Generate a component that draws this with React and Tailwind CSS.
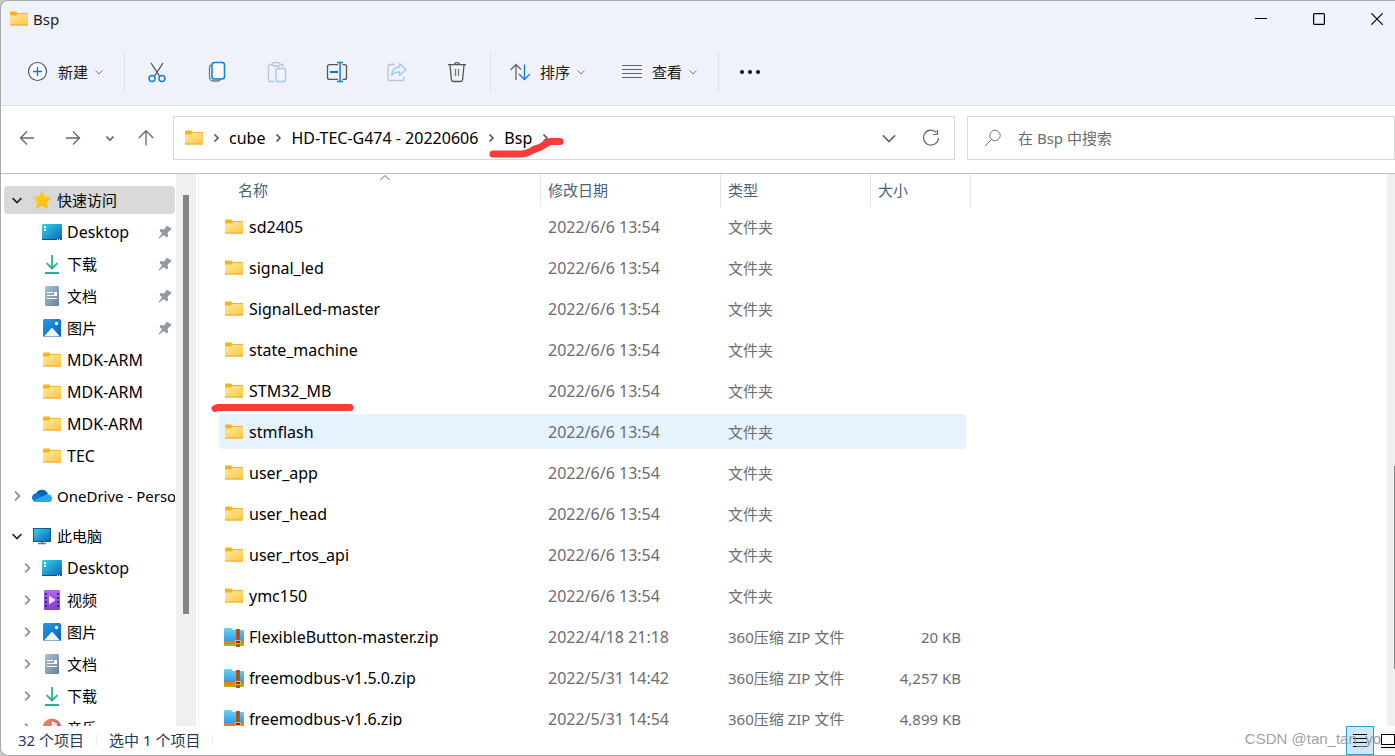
import React from 'react';
import clsx from 'clsx';

const quickAccess = [
  { icon: DesktopIcon, label: 'Desktop', pinned: true },
  { icon: DownloadIcon, label: '下载', pinned: true },
  { icon: DocumentIcon, label: '文档', pinned: true },
  { icon: PictureIcon, label: '图片', pinned: true },
  { icon: FolderIcon, label: 'MDK-ARM' },
  { icon: FolderIcon, label: 'MDK-ARM' },
  { icon: FolderIcon, label: 'MDK-ARM' },
  { icon: FolderIcon, label: 'TEC' },
];

const thisPc = [
  { icon: DesktopIcon, label: 'Desktop' },
  { icon: VideoIcon, label: '视频' },
  { icon: PictureIcon, label: '图片' },
  { icon: DocumentIcon, label: '文档' },
  { icon: DownloadIcon, label: '下载' },
  { icon: MusicIcon, label: '音乐' },
];

const files = [
  { name: 'sd2405', date: '2022/6/6 13:54' },
  { name: 'signal_led', date: '2022/6/6 13:54' },
  { name: 'SignalLed-master', date: '2022/6/6 13:54' },
  { name: 'state_machine', date: '2022/6/6 13:54' },
  { name: 'STM32_MB', date: '2022/6/6 13:54' },
  { name: 'stmflash', date: '2022/6/6 13:54', hovered: true },
  { name: 'user_app', date: '2022/6/6 13:54' },
  { name: 'user_head', date: '2022/6/6 13:54' },
  { name: 'user_rtos_api', date: '2022/6/6 13:54' },
  { name: 'ymc150', date: '2022/6/6 13:54' },
  { name: 'FlexibleButton-master.zip', date: '2022/4/18 21:18', size: '20 KB' },
  { name: 'freemodbus-v1.5.0.zip', date: '2022/5/31 14:42', size: '4,257 KB' },
  { name: 'freemodbus-v1.6.zip', date: '2022/5/31 14:54', size: '4,899 KB' },
];

/* Shared gradients for the coloured icons */
function IconDefs() {
  return (
    <svg width="0" height="0" className="absolute" aria-hidden="true">
      <defs>
        <linearGradient id="folder" x1="0" y1="0" x2="1" y2="1">
          <stop offset="0" stopColor="#ffe9a6" />
          <stop offset="1" stopColor="#ffc83c" />
        </linearGradient>
        <linearGradient id="screen" x1="0" y1="0" x2="1" y2="1">
          <stop offset="0" stopColor="#35d6e4" />
          <stop offset="1" stopColor="#0c62bd" />
        </linearGradient>
        <linearGradient id="down" x1="0" y1="0" x2="0" y2="1">
          <stop offset="0" stopColor="#35c48d" />
          <stop offset="1" stopColor="#12a3a3" />
        </linearGradient>
        <linearGradient id="doc" x1="0" y1="0" x2="1" y2="1">
          <stop offset="0" stopColor="#b0c2d4" />
          <stop offset="1" stopColor="#64809f" />
        </linearGradient>
        <linearGradient id="pic" x1="0" y1="0" x2="1" y2="1">
          <stop offset="0" stopColor="#1d9df0" />
          <stop offset="1" stopColor="#0a62b8" />
        </linearGradient>
        <linearGradient id="video" x1="0" y1="0" x2="0" y2="1">
          <stop offset="0" stopColor="#b266ee" />
          <stop offset="1" stopColor="#7f3fd8" />
        </linearGradient>
        <linearGradient id="music" x1="0" y1="0" x2="1" y2="1">
          <stop offset="0" stopColor="#f08a4b" />
          <stop offset="1" stopColor="#c4509a" />
        </linearGradient>
        <linearGradient id="zip" x1="0" y1="0" x2="0" y2="1">
          <stop offset="0" stopColor="#6fd0f8" />
          <stop offset="1" stopColor="#2f9de8" />
        </linearGradient>
        <linearGradient id="star" x1="0" y1="0" x2="1" y2="1">
          <stop offset="0" stopColor="#ffda2e" />
          <stop offset="1" stopColor="#fdb400" />
        </linearGradient>
      </defs>
    </svg>
  );
}

function Icon({ size = 20, children, className }) {
  return (
    <svg
      width={size}
      height={size}
      viewBox={`0 0 ${size} ${size}`}
      fill="none"
      className={clsx('shrink-0', className)}
      aria-hidden="true"
    >
      {children}
    </svg>
  );
}

function FolderIcon() {
  return (
    <Icon>
      <path d="M1 3.500a1 1 0 0 1 1-1h5.200l2 2-2 3H1z" fill="#f8b416" />
      <path d="M1 6.500h6l2-2h9a1 1 0 0 1 1 1V16a.5.5 0 0 1-.5.5h-17A.5.500 0 0 1 1 16z" fill="url(#folder)" />
      <path d="M1 16h18" stroke="#e9a727" />
      <path d="M9 4.500h10" stroke="#efb335" />
    </Icon>
  );
}

function DesktopIcon() {
  return (
    <Icon>
      <rect y="2" width="20" height="16" rx="1" fill="url(#screen)" />
      <path d="M2 4h2v2H2zM2 7h2v2H2z" fill="#fff" />
      <path d="M0 17h20v.5a.5.5 0 0 1-.5.5H.5a.5.5 0 0 1-.5-.5z" fill="#0b4f93" />
      <path d="M15 17.500h1M17 17.500h1" stroke="#fff" />
    </Icon>
  );
}

function DownloadIcon() {
  return (
    <Icon>
      <path d="M4.500 9l5.500 5.500L15.500 9" stroke="url(#down)" strokeWidth="1.800" />
      <path d="M10 1v13" stroke="#25b596" strokeWidth="1.800" />
      <path d="M3 19h14" stroke="#22b592" strokeWidth="2" />
    </Icon>
  );
}

function DocumentIcon() {
  return (
    <Icon>
      <rect x="3" width="14" height="20" rx="1" fill="url(#doc)" />
      <path d="M5 6.500h6M5 9.500h10M5 12.500h10" stroke="#fff" />
      <path d="M12 6h3v3h-3z" fill="#fff" />
    </Icon>
  );
}

function PictureIcon() {
  return (
    <Icon>
      <rect x="1" y="1" width="18" height="18" rx="1.500" fill="url(#pic)" />
      <path d="m2 18.500 7-8a1.300 1.300 0 0 1 2 0l7 8z" fill="#eef6fd" />
      <circle cx="14.500" cy="5.500" r="1.700" fill="#fff" />
    </Icon>
  );
}

function VideoIcon() {
  return (
    <Icon>
      <rect x="2" width="16" height="20" rx="1" fill="url(#video)" />
      <path d="M4 3v15M16 3v15" stroke="#4b1f92" strokeWidth="2" strokeDasharray="2 2" />
      <path d="m7 5.500 6.500 4.500L7 14.500z" fill="#f4e9ff" />
    </Icon>
  );
}

function MusicIcon() {
  return (
    <Icon>
      <circle cx="10" cy="10" r="9.500" fill="url(#music)" />
      <path d="M10.500 13V4.500l3.500 1.500v2l-3-1" stroke="#fff" strokeWidth="1.500" />
      <circle cx="9" cy="13" r="2" fill="#fff" />
    </Icon>
  );
}

function StarIcon() {
  return (
    <Icon>
      <path
        d="m10 1 2.800 5.900 6.400.8-4.700 4.500 1.200 6.400L10 15.500l-5.700 3.100 1.200-6.400L.8 7.700l6.400-.8z"
        fill="url(#star)"
        stroke="#fbc21a"
        strokeLinejoin="round"
        strokeWidth=".6"
      />
    </Icon>
  );
}

function OneDriveIcon() {
  return (
    <Icon>
      <path d="M4.500 16a4.300 4.300 0 0 1-.5-8.500A6.500 6.500 0 0 1 16 8l-5 5z" fill="#0364b8" />
      <path d="M4.500 16A4.400 4.400 0 1 1 7 8l6 5-7 3z" fill="#0f78d4" />
      <path d="M4.500 16c-1.500 0-2.700-.6-3.500-1.600L13 9.200c3.500-2.200 7 .2 7 3.300a3.500 3.500 0 0 1-3.500 3.500z" fill="#28a8ea" />
    </Icon>
  );
}

function PcIcon() {
  return (
    <Icon>
      <rect x="1" y="2" width="18" height="14" fill="#16598c" />
      <rect x="2" y="3" width="16" height="12" fill="url(#screen)" />
      <path d="M10 16v2M6 17.500h8" stroke="#5f7482" strokeWidth="1.400" />
    </Icon>
  );
}

function ZipIcon() {
  return (
    <Icon>
      <path d="M0 15h20v3a1 1 0 0 1-1 1H1a1 1 0 0 1-1-1z" fill="#7bc72c" />
      <path d="M0 13h20v4H0z" fill="#f57c0a" />
      <path d="M0 2a1 1 0 0 1 1-1h6l2 2h10a1 1 0 0 1 1 1v10H0z" fill="url(#zip)" />
      <path d="M12 2h4v18h-4z" fill="#b35a17" />
      <path d="M14 3v10" stroke="#7d3507" strokeDasharray="1 1" />
      <path d="M11.500 13.500h5v3h-5z" fill="#7a3608" stroke="#f2b25d" />
    </Icon>
  );
}

function PinIcon() {
  return (
    <Icon size={14}>
      <path
        d="M8.500.5 13.500 3.500 12.500 5.500 11.600 5.400 9.600 8l.5 3.200-1.600 1.200L5.900 10 1.200 13.600l-.7-.7 3.700-4.600L1.500 6l1.200-1.900 3.200.4 1.900-2.300z"
        fill="#8d9ba5"
      />
    </Icon>
  );
}

function Chevron({ dir = 'down', size = 8, bold, className }) {
  const paths = {
    down: 'm.5 2.500 3.500 3.500 3.500-3.500',
    right: 'm2.500.5 3.500 3.500-3.500 3.500',
    up: 'm.5 5.500 3.500-3.500 3.500 3.500',
  };
  return (
    <svg width={size} height={size} viewBox="0 0 8 8" fill="none" className={clsx('shrink-0', className)} aria-hidden="true">
      <path d={paths[dir]} stroke="currentColor" strokeWidth={bold ? 1.6 : 1} vectorEffect="non-scaling-stroke" />
    </svg>
  );
}

function Separator() {
  return <div className="w-px h-10 bg-[#dfe1e8]" />;
}

function ToolButton({ label, disabled, children }) {
  return (
    <button type="button" aria-label={label} disabled={disabled} className="w-15 h-10 flex items-center justify-center">
      {children}
    </button>
  );
}

function Toolbar() {
  return (
    <div className="h-[67px] flex items-center pl-[26px]">
      <button type="button" className="flex items-center">
        <Icon size={22}>
          <circle cx="10.500" cy="10.500" r="9" fill="#f7f9fd" stroke="#555" strokeWidth="1.200" />
          <path d="M10.500 6v9M6 10.500h9" stroke="#0078d4" strokeWidth="1.300" />
        </Icon>
        <span className="ml-[9px] mr-[7px]">新建</span>
        <Chevron className="text-[#777]" />
      </button>
      <div className="w-[21px]" />
      <Separator />
      <div className="w-[2px]" />

      <ToolButton label="剪切">
        <Icon size={22}>
          <path d="m5 2 8.500 13.200M17 2 8.500 15.200" stroke="#555" strokeWidth="1.300" />
          <circle cx="6" cy="17.500" r="3" stroke="#0f7fd8" strokeWidth="1.400" />
          <circle cx="16" cy="17.500" r="3" stroke="#0f7fd8" strokeWidth="1.400" />
        </Icon>
      </ToolButton>
      <ToolButton label="复制">
        <Icon size={22}>
          <path d="M5.500 4C4 4.300 3.500 5 3.500 6.500v9c0 3 1 4.500 4 4.500h4c1.500 0 2.500-.5 3-1.500" stroke="#777" strokeWidth="1.300" />
          <rect x="6" y="1.600" width="12.500" height="16.500" rx="2.500" fill="#f7faff" stroke="#0f7fd8" strokeWidth="1.500" />
        </Icon>
      </ToolButton>
      <ToolButton label="粘贴" disabled>
        <Icon size={22}>
          <path d="M7 3.500H4a1.500 1.500 0 0 0-1.500 1.500v14A1.500 1.500 0 0 0 4 20.500h4M14 3.500h1.500A1.500 1.500 0 0 1 17 5v1" stroke="#bfc2c9" strokeWidth="1.300" />
          <rect x="6.500" y="1.600" width="7.500" height="3.400" rx="1.500" stroke="#bfc2c9" strokeWidth="1.300" />
          <rect x="10" y="7.500" width="9.500" height="13" rx="1.500" fill="#eff5fd" stroke="#9fcbee" strokeWidth="1.400" />
        </Icon>
      </ToolButton>
      <ToolButton label="重命名">
        <Icon size={22}>
          <path d="M12 3.600H3.500a2 2 0 0 0-2 2v10.800a2 2 0 0 0 2 2H12M16.500 3.600h2a2 2 0 0 1 2 2v10.800a2 2 0 0 1-2 2h-2" stroke="#555" strokeWidth="1.300" />
          <path d="M4 11h8" stroke="#0078d4" strokeWidth="2" />
          <path d="M14 1.500v19M11 1.500h6M11 20.500h6" stroke="#0f7fd8" strokeWidth="1.500" />
        </Icon>
      </ToolButton>
      <ToolButton label="共享" disabled>
        <Icon size={22}>
          <path d="M8.500 3.500H4.500a2.500 2.500 0 0 0-2.500 2.500v11a2.500 2.500 0 0 0 2.500 2.500h11a2.500 2.500 0 0 0 2.500-2.500v-1.500" stroke="#bfc2c9" strokeWidth="1.300" />
          <path d="M13.500 2.500 20 8.500l-6.500 6v-3.500c-4-.2-6 1-8 3.500.3-5 3-8.300 8-8.500z" stroke="#9fcbee" strokeLinejoin="round" strokeWidth="1.300" />
        </Icon>
      </ToolButton>
      <ToolButton label="删除">
        <Icon size={22}>
          <path d="M2 3.700h18M8.500 3.500c0-2.500 5-2.500 5 0M4 4l1.400 14.500c.1 1.200.8 2 2 2h7.200c1.200 0 1.900-.8 2-2L18 4" stroke="#555" strokeWidth="1.300" />
          <path d="M9.500 8v7M12.500 8v7" stroke="#777" strokeWidth="1.300" />
        </Icon>
      </ToolButton>

      <div className="w-[3px]" />
      <Separator />
      <button type="button" className="flex items-center ml-[18px]">
        <Icon size={22}>
          <path d="M7 19V4M1.500 9 7 3.500l5 5" stroke="#666" strokeWidth="1.300" />
          <path d="M15.500 3.500V18M10 13l5.500 5.500L21 13" stroke="#0f7fd8" strokeWidth="1.400" />
        </Icon>
        <span className="ml-[9px] mr-[7px]">排序</span>
        <Chevron className="text-[#777]" />
      </button>
      <button type="button" className="flex items-center ml-9">
        <Icon size={22}>
          <path d="M1 4.500h20M1 8.500h20M1 12.500h20M1 16.500h20" stroke="#666" strokeWidth="1.200" />
        </Icon>
        <span className="ml-[9px] mr-[7px]">查看</span>
        <Chevron className="text-[#777]" />
      </button>
      <div className="w-[21px]" />
      <Separator />
      <button type="button" aria-label="更多" className="ml-5">
        <Icon size={22}>
          <circle cx="3" cy="11" r="2" fill="#111" />
          <circle cx="11" cy="11" r="2" fill="#111" />
          <circle cx="19" cy="11" r="2" fill="#111" />
        </Icon>
      </button>
    </div>
  );
}

function TitleBar() {
  return (
    <div className="h-[37px] flex items-center pl-2 pr-3 pb-[2px]">
      <FolderIcon />
      <span className="ml-1">Bsp</span>
      <div className="ml-auto flex items-center gap-[46px] text-black">
        <button type="button" aria-label="最小化">
          <Icon size={12}>
            <path d="M0 5.500h12" stroke="currentColor" />
          </Icon>
        </button>
        <button type="button" aria-label="最大化">
          <Icon size={12}>
            <rect x=".6" y=".6" width="10.800" height="10.800" rx="1" stroke="currentColor" strokeWidth="1.200" />
          </Icon>
        </button>
        <button type="button" aria-label="关闭">
          <Icon size={12}>
            <path d="m.3.3 11.400 11.400M11.700.3.3 11.700" stroke="currentColor" strokeWidth="1.200" />
          </Icon>
        </button>
      </div>
    </div>
  );
}

function AddressRow() {
  return (
    <div className="h-[68px] shrink-0 flex items-center pl-[18px] pb-[3px] border-b border-[#bdbdbd]">
      <div className="w-[154px] shrink-0 flex items-center text-[#666]">
        <button type="button" aria-label="后退">
          <Icon size={16}>
            <path d="M15 8H1.500M8 1.500 1.500 8 8 14.500" stroke="currentColor" strokeWidth="1.300" />
          </Icon>
        </button>
        <button type="button" aria-label="前进" className="ml-[30px]">
          <Icon size={16}>
            <path d="M1 8h13.500M8 1.500 14.500 8 8 14.500" stroke="currentColor" strokeWidth="1.300" />
          </Icon>
        </button>
        <button type="button" aria-label="最近浏览的位置" className="ml-[25px]">
          <Chevron bold />
        </button>
        <button type="button" aria-label="上移" className="ml-6">
          <Icon size={16}>
            <path d="M8 15.500V1M.8 8 8 .8 15.200 8" stroke="currentColor" strokeWidth="1.300" />
          </Icon>
        </button>
      </div>

      <div className="h-11 grow min-w-0 flex items-center border border-[#d9d9d9] pl-[10px] pr-[14px] text-base leading-5 text-black">
        <FolderIcon />
        <Chevron dir="right" bold className="text-[#555] mr-[5px] ml-2" />
        <a href="#cube" className="px-1">cube</a>
        <Chevron dir="right" bold className="text-[#555] mx-[5px]" />
        <a href="#project" className="px-1 whitespace-nowrap">HD-TEC-G474 - 20220606</a>
        <Chevron dir="right" bold className="text-[#555] mx-[5px]" />
        <a href="#bsp" className="px-1">Bsp</a>
        <Chevron dir="right" bold className="text-[#555] mx-[5px]" />
        <button type="button" aria-label="以前的位置" className="ml-auto text-[#666]">
          <Chevron size={14} bold />
        </button>
        <button type="button" aria-label="刷新" className="ml-[26px] text-[#666]">
          <Icon size={18}>
            <path d="M14.500 3.500A7.500 7.500 0 1 0 16.500 9M15.500 1v4.500H11" stroke="currentColor" strokeWidth="1.200" />
          </Icon>
        </button>
      </div>

      <label className="ml-3 h-11 w-[428px] flex items-center border border-[#d9d9d9] pl-4">
        <Icon size={18} className="text-[#777]">
          <circle cx="11" cy="6.500" r="5.200" stroke="currentColor" />
          <path d="M7.500 10.500 1 17" stroke="currentColor" />
        </Icon>
        <input
          type="text"
          aria-label="搜索"
          placeholder="在 Bsp 中搜索"
          className="ml-4 grow min-w-0 outline-none placeholder:text-[#6d6d6d]"
        />
      </label>
    </div>
  );
}

function TreeRow({ icon: IconType, label, arrow, child, pinned, selected }) {
  const latin = /^[\w-]+$/.test(label);
  return (
    <a
      href="#tree"
      className={clsx(
        'h-7 my-[2px] flex items-center rounded-sm overflow-hidden',
        child ? 'pl-4' : 'pl-[6px]',
        selected && 'bg-[#d9d9d9]'
      )}
    >
      <span className="w-[14px] mr-2 shrink-0 flex justify-center">
        {arrow && <Chevron dir={arrow} size={10} bold className={arrow === 'down' ? 'text-[#222]' : 'text-[#888]'} />}
      </span>
      <IconType />
      <span className={clsx('ml-[5px] whitespace-nowrap', latin && 'text-base leading-5')}>{label}</span>
      {pinned && (
        <span className="ml-auto mr-[3px]">
          <PinIcon />
        </span>
      )}
    </a>
  );
}

function Sidebar() {
  return (
    <nav className="w-[198px] shrink-0 flex border-r border-[#f3f3f3] text-black">
      <div className="grow min-w-0 pl-[3px] pr-px pt-2 overflow-hidden">
        <div className="flex flex-col pt-[2px]">
          <TreeRow icon={StarIcon} label="快速访问" arrow="down" selected />
          {quickAccess.map((item, i) => (
            <TreeRow key={i} child {...item} />
          ))}
        </div>
        <div className="flex flex-col pt-2">
          <TreeRow icon={OneDriveIcon} label="OneDrive - Personal" arrow="right" />
        </div>
        <div className="flex flex-col pt-2">
          <TreeRow icon={PcIcon} label="此电脑" arrow="down" />
          {thisPc.map((item) => (
            <TreeRow key={item.label} child arrow="right" {...item} />
          ))}
        </div>
      </div>
      {/* Scrollbar */}
      <div className="w-5 mr-[2px] shrink-0 bg-[#f0f0f0] pt-[21px]">
        <div className="mx-auto w-[6px] h-[419px] bg-[#858585]" />
      </div>
    </nav>
  );
}

function FileTable() {
  const head = 'font-normal p-0 pb-[2px] pl-[7px] border-r border-[#e5e5e5]';
  return (
    <table className="w-[752px] table-fixed border-separate border-spacing-0 text-left">
      <thead>
        <tr className="h-[33px] text-[#4c607a]">
          <th className="relative w-[322px] font-normal p-0 pb-[2px] pl-[19px] border-r border-[#e5e5e5]">
            名称
            <Chevron dir="up" size={10} className="absolute left-[161px] -top-px text-[#666]" />
          </th>
          <th className={clsx(head, 'w-[180px]')}>修改日期</th>
          <th className={clsx(head, 'w-[150px]')}>类型</th>
          <th className={clsx(head, 'w-[100px]')}>大小</th>
        </tr>
      </thead>
      <tbody>
        {files.map((file) => {
          const cell = clsx('h-[35px] flex items-center whitespace-nowrap', file.hovered && 'bg-[#e5f3ff]');
          return (
            <tr key={file.name} className="text-[#6d6d6d]">
              <td className="p-0 pt-[2px] pb-1">
                <div className={clsx(cell, 'pl-[5px] rounded-l-sm text-base leading-5 text-black')}>
                  {file.size ? <ZipIcon /> : <FolderIcon />}
                  <span className="ml-[5px]">{file.name}</span>
                </div>
              </td>
              <td className="p-0 pt-[2px] pb-1">
                <div className={clsx(cell, 'pl-[7px] text-base leading-5')}>{file.date}</div>
              </td>
              <td className="p-0 pt-[2px] pb-1">
                <div className={clsx(cell, 'pl-[7px]')}>{file.size ? '360压缩 ZIP 文件' : '文件夹'}</div>
              </td>
              <td className="p-0 pt-[2px] pb-1 pr-[5px]">
                <div className={clsx(cell, 'justify-end pr-[5px] rounded-r-sm')}>{file.size}</div>
              </td>
            </tr>
          );
        })}
      </tbody>
    </table>
  );
}

function StatusBar() {
  return (
    <div className="h-[29px] shrink-0 flex pl-[17px] text-[#1e395b]">
      <div className="flex items-center pb-[2px]">
        <span>32 个项目</span>
        <div className="w-px h-3 bg-[#f0f0f0] mx-3" />
        <span>选中 1 个项目</span>
        <div className="w-px h-3 bg-[#f0f0f0] mx-3" />
      </div>
      <div className="ml-auto h-full flex items-center">
        <button
          type="button"
          aria-label="详细信息"
          className="w-7 h-full flex items-center justify-center border border-[#26a0da] bg-[#cce8f7] text-black"
        >
          <Icon size={14}>
            <path d="M0 .5h14M0 4.500h14M0 8.500h14M0 12.500h14" stroke="currentColor" />
          </Icon>
        </button>
        <button type="button" aria-label="大图标" className="ml-1 pl-[3px] w-[17px] h-5 flex items-center bg-[#f5f5f5] text-black">
          <Icon size={14}>
            <rect x=".5" y=".5" width="13" height="10" fill="#fff" stroke="currentColor" />
            <path d="M0 13.500h14" stroke="currentColor" />
          </Icon>
        </button>
      </div>
    </div>
  );
}

export default function App() {
  return (
    <div className="h-screen bg-[#c9c9c9] font-['Noto_Sans','Noto_Sans_CJK_SC',sans-serif] text-[15px] leading-5 text-[#1a1a1a]">
      <IconDefs />
      <div className="relative h-full flex flex-col bg-white border-l border-y border-[#a9a9a9] rounded-l-lg overflow-hidden">
        <header className="shrink-0 bg-[#eff2fa] border-b border-[#dcdfe5]">
          <TitleBar />
          <Toolbar />
        </header>
        <AddressRow />

        <div className="grow min-h-0 flex overflow-hidden">
          <Sidebar />
          <main className="grow min-w-0 pl-5 overflow-hidden">
            <FileTable />
          </main>
          <div className="w-2 shrink-0 bg-[#f0f0f0] pt-[292px]">
            <div className="ml-auto w-px h-[203px] bg-[#858585]" />
          </div>
        </div>
        <StatusBar />

        {/* Marker strokes */}
        <svg width="80" height="26" fill="none" className="absolute left-[486px] top-[132px] pointer-events-none" aria-hidden="true">
          <path d="M6 21h28c6 0 10-3 14-5 7-1 9-5 15-7.500h10" stroke="#fb3a3a" strokeWidth="7" strokeLinecap="round" strokeLinejoin="round" />
        </svg>
        <svg width="150" height="12" fill="none" className="absolute left-[208px] top-[400px] pointer-events-none" aria-hidden="true">
          <path d="M6 7.500 9 6.500h132" stroke="#fb3a3a" strokeWidth="7" strokeLinecap="round" />
        </svg>

        <span className="absolute right-[14px] bottom-[6px] font-['Liberation_Sans',sans-serif] text-[#888]/80 pointer-events-none">
          CSDN @tan_tan_yo
        </span>
      </div>
    </div>
  );
}
